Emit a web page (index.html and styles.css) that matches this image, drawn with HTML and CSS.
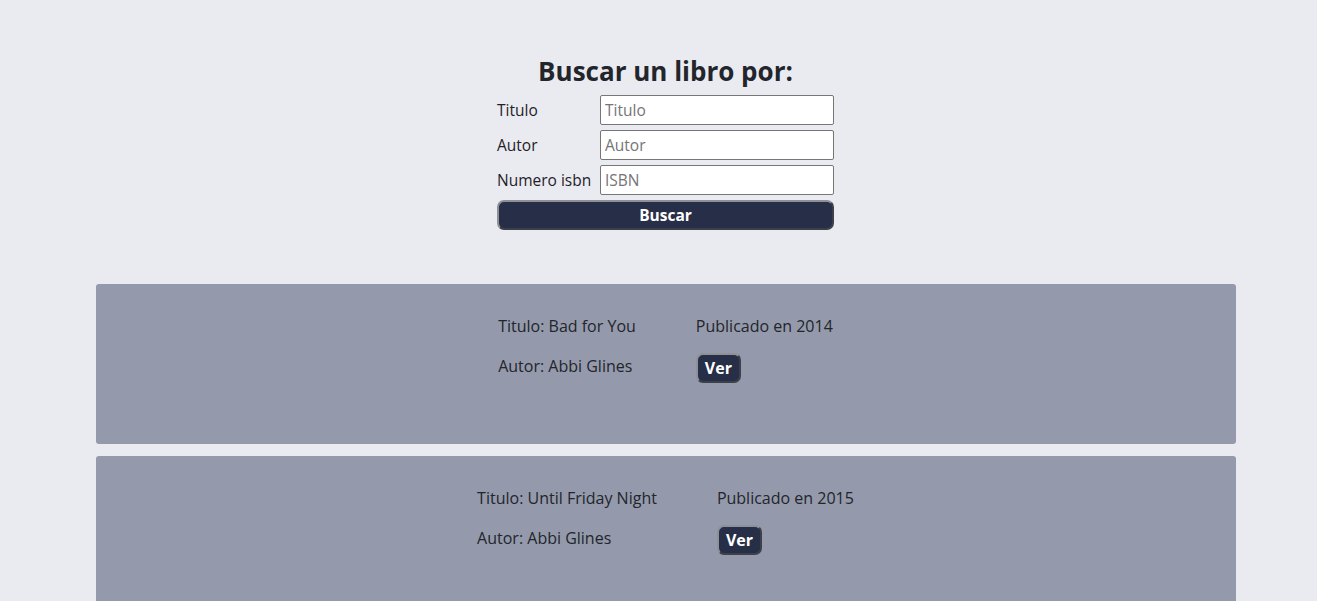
FILE: index.html
```html
<!DOCTYPE html>
<html lang="es">
<head>
<meta charset="utf-8">
<title>Buscar libro</title>
<link rel="stylesheet" href="styles.css">
</head>
<body>
<div class="page">
  <section class="search">
    <h2 class="search-title">Buscar un libro por:</h2>
    <form class="search-form">
      <label class="field-label" for="titulo">Titulo</label>
      <input class="field-input" id="titulo" type="text" placeholder="Titulo">
      <label class="field-label" for="autor">Autor</label>
      <input class="field-input" id="autor" type="text" placeholder="Autor">
      <label class="field-label" for="isbn">Numero isbn</label>
      <input class="field-input" id="isbn" type="text" placeholder="ISBN">
      <button class="search-btn" type="button">Buscar</button>
    </form>
  </section>
  <section class="results">
    <div class="card">
      <div class="card-inner">
        <div class="col">
          <p class="line">Titulo: Bad for You</p>
          <p class="line">Autor: Abbi Glines</p>
        </div>
        <div class="col">
          <p class="line">Publicado en 2014</p>
          <button class="ver-btn" type="button">Ver</button>
        </div>
      </div>
    </div>
    <div class="card">
      <div class="card-inner">
        <div class="col">
          <p class="line">Titulo: Until Friday Night</p>
          <p class="line">Autor: Abbi Glines</p>
        </div>
        <div class="col">
          <p class="line">Publicado en 2015</p>
          <button class="ver-btn" type="button">Ver</button>
        </div>
      </div>
    </div>
  </section>
</div>
</body>
</html>
```
FILE: styles.css
```css
html, body {
  margin: 0;
  padding: 0;
  background: #eaebf0;
}
body {
  font-family: "Open Sans", "Noto Sans", sans-serif;
  color: #1f2129;
  padding-left: 14px;
}
.page {
  width: 1140px;
  margin: 0 auto;
}
.search {
  display: flex;
  flex-direction: column;
  align-items: center;
  padding-top: 53px;
}
.search-title {
  margin: 0 0 6px;
  font-size: 26px;
  line-height: 36px;
  font-weight: 700;
  color: #23252c;
}
.search-form {
  display: grid;
  grid-template-columns: 103px 234px;
  row-gap: 5px;
  align-items: center;
}
.field-label {
  font-size: 15.5px;
  color: #1f2129;
}
.field-input {
  box-sizing: border-box;
  width: 234px;
  height: 30px;
  margin: 0;
  padding: 0 4px;
  border: 1px solid #767676;
  border-radius: 2px;
  background: #fff;
  font-family: inherit;
  font-size: 15.5px;
  color: #222;
}
.field-input::placeholder {
  color: #757575;
}
.search-btn {
  grid-column: 1 / 3;
  height: 30px;
  margin: 0;
  border: 2px solid #6d6f78;
  border-color: #8f9198 #3e4049 #3e4049 #8f9198;
  border-radius: 7px;
  background: #272e48;
  color: #fff;
  font-family: inherit;
  font-size: 15.5px;
  font-weight: 700;
}
.results {
  margin-top: 54px;
  display: flex;
  flex-direction: column;
  gap: 12px;
}
.card {
  height: 160px;
  box-sizing: border-box;
  background: #949aab;
  border-radius: 3px;
  padding-top: 31px;
  display: flex;
  justify-content: center;
}
.card-inner {
  display: flex;
  gap: 60px;
  align-items: flex-start;
}
.col {
  display: flex;
  flex-direction: column;
  align-items: flex-start;
  gap: 18px;
}
.line {
  margin: 0;
  font-size: 16px;
  line-height: 22px;
  color: #23252c;
}
.ver-btn {
  height: 30px;
  padding: 0 7px;
  margin: -2px 0 0;
  border: 2px solid #6d6f78;
  border-color: #8f9198 #3e4049 #3e4049 #8f9198;
  border-radius: 7px;
  background: #272e48;
  color: #fff;
  font-family: inherit;
  font-size: 16px;
  font-weight: 700;
}
```
